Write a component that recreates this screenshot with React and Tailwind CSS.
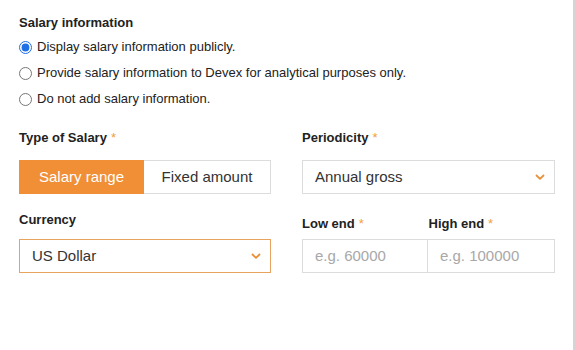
import React, { useState } from 'react';

function Chevron() {
  return (
    <svg className="w-[10px] h-[7px]" viewBox="0 0 10 7" fill="none">
      <path d="M1.5 1.5l3.5 3.4 3.5-3.4" stroke="#e8913a" strokeWidth="1.8" strokeLinecap="round" strokeLinejoin="round" />
    </svg>
  );
}

function Label({ children, required }) {
  return (
    <div className="text-[13px] font-bold text-[#222] leading-4">
      {children}
      {required && <span className="text-[#f0a040] ml-1 font-normal">*</span>}
    </div>
  );
}

export default function App() {
  const [choice, setChoice] = useState('public');
  const [type, setType] = useState('range');

  const options = [
    ['public', 'Display salary information publicly.'],
    ['devex', 'Provide salary information to Devex for analytical purposes only.'],
    ['none', 'Do not add salary information.'],
  ];

  return (
    <div className="w-[575px] h-[350px] bg-white font-['Liberation_Sans',Arial,sans-serif] text-[#222] border-r-2 border-[#d4d4d4] overflow-hidden">
      <div className="pl-[19px] pt-[15px] w-[555px]">
        <div className="text-[13px] font-bold leading-4">Salary information</div>

        <div className="mt-[8px] flex flex-col gap-[10px]">
          {options.map(([key, text]) => (
            <label key={key} className="flex items-center gap-[5px] text-[13px] leading-4 text-[#222]">
              <input
                type="radio"
                name="salary"
                checked={choice === key}
                onChange={() => setChoice(key)}
                className="m-0 w-[13px] h-[13px] accent-[#1f6fe5]"
              />
              {text}
            </label>
          ))}
        </div>

        <div className="mt-[23px] grid grid-cols-[252px_253px] gap-x-[31px]">
          <div>
            <Label required>Type of Salary</Label>
            <div className="mt-[14px] flex h-[34px] text-[15px]">
              <button
                onClick={() => setType('range')}
                className={
                  type === 'range'
                    ? 'w-[125px] bg-[#f08f36] text-white border border-[#f08f36]'
                    : 'w-[125px] bg-white text-[#333] border border-[#dcdcdc]'
                }
              >
                Salary range
              </button>
              <button
                onClick={() => setType('fixed')}
                className={
                  type === 'fixed'
                    ? 'flex-1 bg-[#f08f36] text-white border border-[#f08f36]'
                    : 'flex-1 bg-white text-[#333] border border-[#dcdcdc] border-l-0'
                }
              >
                Fixed amount
              </button>
            </div>

            <div className="mt-[18px]">
              <Label>Currency</Label>
            </div>
            <div className="mt-[11px] h-[34px] border border-[#e7a460] flex items-center justify-between pl-[12px] pr-[9px] text-[15px] text-[#333]">
              <span>US Dollar</span>
              <Chevron />
            </div>
          </div>

          <div>
            <Label required>Periodicity</Label>
            <div className="mt-[14px] h-[34px] border border-[#dcdcdc] flex items-center justify-between pl-[12px] pr-[9px] text-[15px] text-[#333]">
              <span>Annual gross</span>
              <Chevron />
            </div>

            <div className="mt-[22px] grid grid-cols-2">
              <Label required>Low end</Label>
              <Label required>High end</Label>
            </div>
            <div className="mt-[7px] grid grid-cols-[126px_127px] h-[34px]">
              <input
                placeholder="e.g. 60000"
                className="border border-[#dcdcdc] px-[12px] text-[15px] outline-none placeholder:text-[#a8a8a8]"
              />
              <input
                placeholder="e.g. 100000"
                className="border border-[#dcdcdc] border-l-0 px-[12px] text-[15px] outline-none placeholder:text-[#a8a8a8]"
              />
            </div>
          </div>
        </div>
      </div>
    </div>
  );
}
